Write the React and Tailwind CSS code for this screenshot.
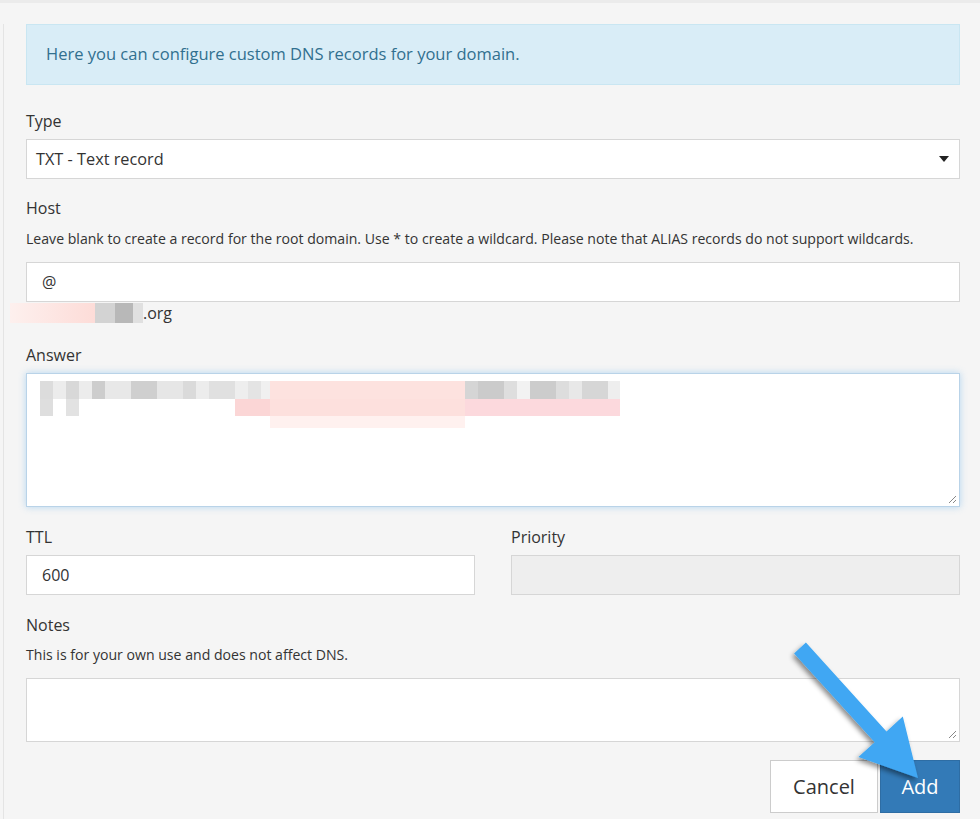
import React from "react";

const font = { fontFamily: '"Open Sans", "Noto Sans", Arial, sans-serif' };

function Blocks({ segs, h }) {
  return (
    <div className="flex" style={{ height: h }}>
      {segs.map(([w, c], i) => (
        <div key={i} style={{ width: w, background: c }} />
      ))}
    </div>
  );
}

function Grip() {
  return (
    <svg className="absolute right-[2px] bottom-[2px]" width="9" height="9" viewBox="0 0 9 9">
      <line x1="1" y1="8" x2="8" y2="1" stroke="#888" strokeWidth="1" />
      <line x1="5" y1="8" x2="8" y2="5" stroke="#888" strokeWidth="1" />
    </svg>
  );
}

export default function App() {
  const row1 = [
    [13, "#dcdcdc"], [13, "#ececec"], [13, "#d8d8d8"], [13, "#ececec"], [13, "#cdcdcd"],
    [26, "#e8e8e8"], [26, "#cfcfcf"], [26, "#e6e6e6"], [13, "#dadada"], [13, "#ececec"],
    [26, "#e0e0e0"], [13, "#eeeeee"], [13, "#e4e4e4"], [9, "#f0f0f0"],
    [195, "#fde2df"],
    [13, "#d5d5d5"], [26, "#cbcbcb"], [13, "#dedede"], [13, "#f2f2f2"], [26, "#cccccc"],
    [13, "#dddddd"], [13, "#e8e8e8"], [26, "#d6d6d6"], [12, "#eeeeee"],
  ];
  const row2 = [
    [13, "#dedede"], [13, "transparent"], [13, "#e2e2e2"], [156, "transparent"],
    [35, "#fbd6d6"], [195, "#fde0dd"], [155, "#fcd9dd"],
  ];
  const row3 = [[230, "transparent"], [195, "#fff1ef"]];

  return (
    <div className="relative w-[980px] h-[819px] overflow-hidden bg-[#f5f5f5] text-[#333]" style={font}>
      <div className="h-[3px] bg-[#ebebeb]" />
      <div className="ml-[3px] border-l border-[#e4e4e4] h-[816px]">
        <div className="pl-[22px] pr-[20px]">
          <div className="mt-[21px] h-[61px] flex items-center px-[19px] bg-[#d9edf7] border border-[#c9e6f2] text-[#31708f] text-[16.5px]">
            Here you can configure custom DNS records for your domain.
          </div>

          <div className="mt-[25px] h-[22px] leading-[22px] text-[16px]">Type</div>
          <div className="mt-[7px] h-[40px] bg-white border border-[#d6d6d6] flex items-center justify-between pl-[9px] pr-[10px] text-[16.3px]">
            <span>TXT - Text record</span>
            <svg width="10" height="6" viewBox="0 0 10 6"><path d="M0 0 L10 0 L5 6 Z" fill="#222" /></svg>
          </div>

          <div className="mt-[18px] h-[22px] leading-[22px] text-[16px]">Host</div>
          <div className="mt-[10px] h-[20px] leading-[20px] text-[14.1px]">
            Leave blank to create a record for the root domain. Use * to create a wildcard. Please note that ALIAS records do not support wildcards.
          </div>
          <div className="mt-[13px] h-[40px] bg-white border border-[#d6d6d6] flex items-center pl-[15px] text-[16px]">@</div>
          <div className="mt-0 h-[22px] flex items-center -ml-[16px]">
            <div className="flex h-[20px]">
              <div className="w-[85px] bg-gradient-to-r from-[#fdf0ee] to-[#fddcd8]" />
              <div className="w-[20px] bg-[#d3d3d3]" />
              <div className="w-[18px] bg-[#b8b8b8]" />
              <div className="w-[10px] bg-[#e0e0e0]" />
            </div>
            <span className="text-[16px] leading-[22px]">.org</span>
          </div>

          <div className="mt-[20px] h-[22px] leading-[22px] text-[16px]">Answer</div>
          <div className="relative mt-[7px] h-[134px] bg-white border border-[#b9d3e8] shadow-[0_0_7px_rgba(102,175,233,0.45)] pl-[13px] pt-[7px]">
            <Blocks segs={row1} h={18} />
            <Blocks segs={row2} h={17} />
            <Blocks segs={row3} h={12} />
            <Grip />
          </div>

          <div className="mt-[19px] grid grid-cols-2 gap-x-[36px]">
            <div>
              <div className="h-[22px] leading-[22px] text-[16px]">TTL</div>
              <div className="mt-[7px] h-[40px] bg-white border border-[#d6d6d6] flex items-center pl-[15px] text-[16px]">600</div>
            </div>
            <div>
              <div className="h-[22px] leading-[22px] text-[16px]">Priority</div>
              <div className="mt-[7px] h-[40px] bg-[#eeeeee] border border-[#d6d6d6]" />
            </div>
          </div>

          <div className="mt-[19px] h-[22px] leading-[22px] text-[16px]">Notes</div>
          <div className="mt-[9px] h-[20px] leading-[20px] text-[14.1px]">This is for your own use and does not affect DNS.</div>
          <div className="relative mt-[13px] h-[64px] bg-white border border-[#d6d6d6]">
            <Grip />
          </div>

          <div className="mt-[18px] flex justify-end gap-[2px]">
            <div className="w-[108px] h-[53px] bg-white border border-[#cccccc] flex items-center justify-center text-[20px] text-[#333]">Cancel</div>
            <div className="w-[80px] h-[53px] bg-[#337ab7] border border-[#2e6da4] flex items-center justify-center text-[20px] text-white">Add</div>
          </div>
        </div>
      </div>

      <svg className="absolute inset-0 pointer-events-none" width="980" height="819" viewBox="0 0 980 819">
        <defs>
          <filter id="sh" x="-20%" y="-20%" width="140%" height="140%">
            <feDropShadow dx="-2" dy="3" stdDeviation="2.5" floodColor="#000" floodOpacity="0.45" />
          </filter>
        </defs>
        <polygon
          points="805.9,642.6 886.5,731.4 902.8,716.6 918,778 858.4,757 874.7,742.2 794.1,653.4"
          fill="#3fa7f3"
          filter="url(#sh)"
        />
      </svg>
    </div>
  );
}
